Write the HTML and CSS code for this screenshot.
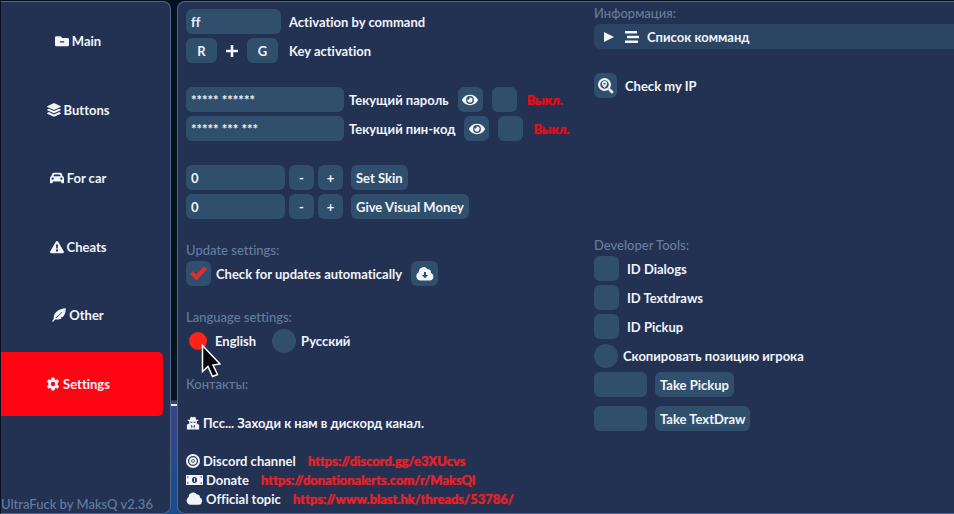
FILE: index.html
```html
<!DOCTYPE html>
<html lang="en">
<head>
<meta charset="utf-8">
<meta name="viewport" content="width=device-width, initial-scale=1">
<title>Settings</title>
<link rel="stylesheet" href="styles.css">
</head>
<body>
<div class="app">
  <aside class="sidebar">
    <nav class="nav">
      <button class="nav-item" type="button">
        <svg class="icon" viewBox="0 0 16 16" aria-hidden="true"><path fill-rule="evenodd" d="M2 2.500h4.500L8.300 4.500H14.500a1.500 1.500 0 0 1 1.500 1.500v6.500A1.500 1.500 0 0 1 14.500 14h-13A1.500 1.500 0 0 1 0 12.500V4a1.500 1.500 0 0 1 1.500-1.500zM5.500 8.200v1.600h5V8.200z"/></svg>
        <span>Main</span>
      </button>
      <button class="nav-item" type="button">
        <svg class="icon" viewBox="0 0 16 16" aria-hidden="true"><path d="M8 0l7.700 3.600c.4.200.4.700 0 .9L8 8 .3 4.500c-.4-.2-.4-.7 0-.9zM.3 7.400l1.900-.9L8 9.200l5.800-2.700 1.900.9c.4.200.4.700 0 .9L8 11.800.3 8.300c-.4-.2-.4-.7 0-.9zM.3 11.300l1.900-.9L8 13.100l5.800-2.700 1.900.9c.4.200.4.700 0 .9L8 15.800.3 12.200c-.4-.2-.4-.7 0-.9z"/></svg>
        <span>Buttons</span>
      </button>
      <button class="nav-item" type="button">
        <svg class="icon" viewBox="0 0 16 16" aria-hidden="true"><path fill-rule="evenodd" d="M4.500 2h7c1 0 1.700.5 2.100 1.400L14.500 6c.9.300 1.500 1 1.500 2v5c0 .6-.4 1-1 1h-1c-.6 0-1-.4-1-1v-1H3v1c0 .6-.4 1-1 1H1c-.6 0-1-.4-1-1V8c0-1 .6-1.700 1.500-2l.9-2.600C2.800 2.500 3.500 2 4.500 2zM4 6h8l-.6-1.600a.8.8 0 0 0-.7-.4H5.300a.8.8 0 0 0-.7.4zM3 7.500A1.300 1.300 0 1 0 3 10.100 1.300 1.300 0 1 0 3 7.500zm10 0a1.300 1.300 0 1 0 0 2.600 1.300 1.300 0 1 0 0-2.600z"/></svg>
        <span>For car</span>
      </button>
      <button class="nav-item" type="button">
        <svg class="icon" viewBox="0 0 16 16" aria-hidden="true"><path fill-rule="evenodd" d="M9.200 1.700l6.500 11.200c.5.900-.1 2.100-1.200 2.100h-13C.4 15-.2 13.800.3 12.900L6.800 1.700c.5-.9 1.900-.9 2.400 0zM6.800 5l.4 4.700h1.600L9.200 5zM8 10.700a1.300 1.300 0 1 0 0 2.600 1.300 1.300 0 1 0 0-2.600z"/></svg>
        <span>Cheats</span>
      </button>
      <button class="nav-item" type="button">
        <svg class="icon" viewBox="0 0 16 16" aria-hidden="true"><path fill-rule="evenodd" d="M15.600.3C15.900 4 14.800 8 12.500 10.200l-3.200.3 2 .8C9.500 12.800 6 13.500 3.500 13L1.300 15.600c-.5.500-1.500-.2-1-.9L2 12.300C1.700 9 3 6 5.500 4 8.500 1.500 12 .6 15.600.3zM11.500 4.200L4 11.200l.8.600 7.200-7.200z"/></svg>
        <span>Other</span>
      </button>
      <button class="nav-item nav-item-active" type="button" aria-current="page">
        <svg class="icon" viewBox="0 0 16 16" aria-hidden="true"><path fill-rule="evenodd" d="M6.500.5h3l.5 2.100 1.300.8 2.100-.7 1.500 2.600-1.600 1.500v2.400l1.600 1.500-1.500 2.600-2.100-.7-1.300.8-.5 2.100h-3L6 13.400l-1.300-.8-2.100.7-1.500-2.600 1.600-1.500V6.800L1.100 5.300l1.500-2.600 2.100.7L6 2.600zM8 5.500A2.500 2.500 0 1 0 8 10.500 2.500 2.500 0 1 0 8 5.500z"/></svg>
        <span>Settings</span>
      </button>
    </nav>
    <p class="version">UltraFuck by MaksQ v2.36</p>
  </aside>

  <main class="panel">
    <div class="column">
      <section class="group">
        <div class="row gap-m">
          <input class="box field-command" id="command" type="text" value="ff">
          <label for="command">Activation by command</label>
        </div>
        <div class="row gap-m">
          <div class="row keys">
            <button class="box key" type="button">R</button>
            <svg class="icon" viewBox="0 0 14 14" aria-hidden="true"><path d="M5.700 1h2.600v4.700H13v2.600H8.300V13H5.700V8.300H1V5.700h4.700z"/></svg>
            <button class="box key" type="button">G</button>
          </div>
          <span>Key activation</span>
        </div>
      </section>

      <section class="group">
        <div class="row gap-l">
          <div class="row gap-s">
            <input class="box field-secret" id="password" type="text" value="***** ******">
            <label for="password">Текущий пароль</label>
          </div>
          <button class="box square" type="button" aria-label="Show password">
            <svg class="icon" viewBox="0 0 16 16" aria-hidden="true"><path fill-rule="evenodd" d="M8 2.800c3.500 0 6.300 2 7.900 4.800.1.300.1.600 0 .9C14.300 11.300 11.500 13.200 8 13.200S1.700 11.300.1 8.500a1 1 0 0 1 0-.9C1.700 4.800 4.500 2.800 8 2.800zM8 4.100a3.900 3.900 0 1 0 0 7.800 3.900 3.900 0 1 0 0-7.800zM8 5.400a2.600 2.600 0 1 1-2.500 1.900 1.300 1.300 0 0 0 1.800-1.800c.2-.1.500-.1.700-.1z"/></svg>
          </button>
          <input class="box check" type="checkbox" aria-label="Use password">
          <span class="off">Выкл.</span>
        </div>
        <div class="row gap-l">
          <div class="row gap-s">
            <input class="box field-secret" id="pin" type="text" value="***** *** ***">
            <label for="pin">Текущий пин-код</label>
          </div>
          <button class="box square" type="button" aria-label="Show PIN">
            <svg class="icon" viewBox="0 0 16 16" aria-hidden="true"><path fill-rule="evenodd" d="M8 2.800c3.500 0 6.300 2 7.900 4.800.1.300.1.600 0 .9C14.300 11.300 11.500 13.200 8 13.200S1.700 11.300.1 8.500a1 1 0 0 1 0-.9C1.700 4.800 4.500 2.800 8 2.800zM8 4.100a3.900 3.900 0 1 0 0 7.800 3.900 3.900 0 1 0 0-7.800zM8 5.400a2.600 2.600 0 1 1-2.500 1.900 1.300 1.300 0 0 0 1.800-1.800c.2-.1.500-.1.700-.1z"/></svg>
          </button>
          <input class="box check" type="checkbox" aria-label="Use PIN">
          <span class="off">Выкл.</span>
        </div>
      </section>

      <section class="group">
        <div class="row gap-m">
          <div class="row gap-xs">
            <input class="box field-number" type="text" value="0" aria-label="Skin">
            <button class="box square" type="button">-</button>
            <button class="box square" type="button">+</button>
          </div>
          <button class="box action" type="button">Set Skin</button>
        </div>
        <div class="row gap-m">
          <div class="row gap-xs">
            <input class="box field-number" type="text" value="0" aria-label="Money">
            <button class="box square" type="button">-</button>
            <button class="box square" type="button">+</button>
          </div>
          <button class="box action" type="button">Give Visual Money</button>
        </div>
      </section>

      <section class="group">
        <h2 class="heading">Update settings:</h2>
        <div class="row gap-l">
          <div class="row gap-s">
            <input class="box check" id="updates" type="checkbox" checked>
            <label for="updates">Check for updates automatically</label>
          </div>
          <button class="box square download" type="button" aria-label="Download update">
            <svg class="icon" viewBox="0 0 18 14" aria-hidden="true"><path fill-rule="evenodd" d="M4.500 13.500A4.300 4.300 0 0 1 2.800 5.300 4.800 4.800 0 0 1 11.500 2.200a2.900 2.900 0 0 1 3.300 3.600 4 4 0 0 1-.8 7.700zM8 5v3H5.800L9 11.300 12.200 8H10V5z"/></svg>
          </button>
        </div>
      </section>

      <section class="group">
        <h2 class="heading">Language settings:</h2>
        <div class="row languages">
          <div class="row gap-s">
            <input class="radio" id="lang-en" name="lang" type="radio" checked>
            <label for="lang-en">English</label>
            <svg class="cursor" viewBox="0 0 20 34" aria-hidden="true"><path d="M1.500 1.500v26l5.500-5 4.500 10 5-2-4.500-9.500 7-1z"/></svg>
          </div>
          <div class="row gap-s">
            <input class="radio" id="lang-ru" name="lang" type="radio">
            <label for="lang-ru">Русский</label>
          </div>
        </div>
      </section>

      <section class="group">
        <h2 class="heading">Контакты:</h2>
      </section>

      <section class="contacts">
        <p class="line invite">
          <svg class="icon" viewBox="0 0 14 16" aria-hidden="true"><path fill-rule="evenodd" d="M4.500.8L7 1.400 9.500.8l1.300 3.500H13v1.500h-1.500l-.2 2.700L14 10v5.500H0V10l2.700-1.500-.2-2.700H1V4.300h2.200zM4 6.500v1.300h2.300V6.500zm3.700 0v1.300H10V6.500zM4.500 10l1.200 4.500.8-3zm5 0l-2 1.500.8 3z"/></svg>
          <span>Псс... Заходи к нам в дискорд канал.</span>
        </p>
        <p class="line">
          <svg class="icon" viewBox="0 0 14 14" aria-hidden="true"><circle class="ring" cx="7" cy="7" r="6"/><circle class="ring" cx="7" cy="7" r="2.800"/><circle cx="7" cy="7" r="1"/></svg>
          <span>Discord channel</span>
          <a class="link" href="https://discord.gg/e3XUcvs">https://discord.gg/e3XUcvs</a>
        </p>
        <p class="line">
          <svg class="icon icon-wide" viewBox="0 0 17 12" aria-hidden="true"><path fill-rule="evenodd" d="M0 1h17v10H0zM8.500 3C7 3 6 4.300 6 6s1 3 2.500 3S11 7.700 11 6 10 3 8.500 3zM8 4.200h1v3.600H8zM1.300 2.200v1.500h1V2.200zm0 6.100v1.500h1V8.300zM14.700 2.200v1.500h1V2.200zm0 6.100v1.500h1V8.300z"/></svg>
          <span>Donate</span>
          <a class="link" href="https://donationalerts.com/r/MaksQl">https://donationalerts.com/r/MaksQl</a>
        </p>
        <p class="line">
          <svg class="icon icon-wide" viewBox="0 0 18 14" aria-hidden="true"><path d="M4.500 13A4.300 4.300 0 0 1 2.800 5 4.800 4.800 0 0 1 11.500 2.200a2.900 2.900 0 0 1 3.300 3.300A4 4 0 0 1 14 13z"/></svg>
          <span>Official topic</span>
          <a class="link" href="https://www.blast.hk/threads/53786/">https://www.blast.hk/threads/53786/</a>
        </p>
      </section>
    </div>

    <div class="column column-side">
      <section class="info">
        <h2 class="heading">Информация:</h2>
        <details class="commands">
          <summary class="summary">
            <svg class="icon arrow" viewBox="0 0 10 12" aria-hidden="true"><path d="M0 1l10 5-10 5z"/></svg>
            <svg class="icon" viewBox="0 0 14 14" aria-hidden="true"><path d="M0 1h12v2.600H0zM2 5.700h12v2.600H2zM0 10.400h13V13H0z"/></svg>
            <span>Список комманд</span>
          </summary>
        </details>
        <div class="row gap-m ip">
          <button class="box tool" id="check-ip" type="button" aria-label="Check my IP">
            <svg class="icon" viewBox="0 0 14 14" aria-hidden="true"><circle class="ring" cx="5.700" cy="5.700" r="4.700"/><path fill-rule="evenodd" d="M8.800 10.400L10.400 8.800l3.400 3.400-1.600 1.600zM5.700 2.700a2.300 2.300 0 0 1 2.300 2.300c0 1.300-1.200 2.300-2.300 3.700C4.600 7.300 3.400 6.300 3.400 5a2.300 2.300 0 0 1 2.300-2.300zm0 1.500a.9.900 0 1 0 0 1.800.9.900 0 1 0 0-1.800z"/></svg>
          </button>
          <label for="check-ip">Check my IP</label>
        </div>
      </section>

      <section class="tools">
        <h2 class="heading">Developer Tools:</h2>
        <div class="row gap-m">
          <input class="box check" id="id-dialogs" type="checkbox">
          <label for="id-dialogs">ID Dialogs</label>
        </div>
        <div class="row gap-m">
          <input class="box check" id="id-textdraws" type="checkbox">
          <label for="id-textdraws">ID Textdraws</label>
        </div>
        <div class="row gap-m">
          <input class="box check" id="id-pickup" type="checkbox">
          <label for="id-pickup">ID Pickup</label>
        </div>
        <div class="row gap-s">
          <input class="radio" id="copy-position" type="radio">
          <label for="copy-position">Скопировать позицию игрока</label>
        </div>
        <div class="row gap-m">
          <input class="box field-id" type="text" aria-label="Pickup ID">
          <button class="box action" type="button">Take Pickup</button>
        </div>
        <div class="row gap-m take-textdraw">
          <input class="box field-id" type="text" aria-label="TextDraw ID">
          <button class="box action" type="button">Take TextDraw</button>
        </div>
      </section>
    </div>
  </main>
</div>
</body>
</html>
```
FILE: styles.css
```css
:root {
  --panel: #233252;
  --edge: #52658a;
  --box: #304f6d;
  --muted: #657c9f;
  --text: #f0f4fb;
  --red: #ff0513;
}

* {
  box-sizing: border-box;
}

body {
  margin: 0;
  background: linear-gradient(#03101f 0, #04131f 400px, #43406f 401px, #43406f 404px, #e4e8f5 404px, #e4e8f5 406px, #3c4285 406px, #1d4d8c 480px);
  color: var(--text);
  font: 700 13px/16px "Trebuchet MS", Lato, "Noto Sans", sans-serif;
  font-variant-ligatures: none;
}

h2,
p {
  margin: 0;
}

input,
button {
  margin: 0;
  border: 0;
  color: inherit;
  font: inherit;
  font-variant-ligatures: none;
}

.app {
  display: grid;
  grid-template-columns: 171px 1fr;
  gap: 6px;
  min-height: 100vh;
  padding-top: 1px;
}

.icon {
  flex: none;
  width: 14px;
  height: 14px;
  fill: currentColor;
}

.icon-wide {
  width: 17px;
}

.ring {
  fill: none;
  stroke: currentColor;
  stroke-width: 2;
}

.sidebar {
  display: flex;
  flex-direction: column;
  border: 1px solid var(--edge);
  border-left-color: #08101f;
  border-radius: 0 8px 8px 0;
  background: var(--panel);
}

.nav {
  display: grid;
  flex: 1;
  grid-auto-rows: 1fr;
  gap: 4px;
  margin: 7px 7px 80px 0;
}

.nav-item {
  display: flex;
  align-items: center;
  justify-content: center;
  gap: 3px;
  padding: 0 8px 0 0;
  border-radius: 0 5px 5px 0;
  background: none;
}

.nav-item-active {
  background: var(--red);
}

.version {
  padding-bottom: 1px;
  color: var(--muted);
  font-weight: 500;
  white-space: nowrap;
}

.panel {
  display: grid;
  grid-template-columns: 17fr 15fr;
  align-items: start;
  padding: 7px 0 0 8px;
  border: 1px solid var(--edge);
  border-right: 0;
  border-radius: 8px 0 0 8px;
  background: var(--panel);
}

.column,
.group,
.tools {
  display: flex;
  flex-direction: column;
}

.column {
  gap: 24px;
}

.group {
  gap: 4px;
}

.row {
  display: flex;
  align-items: center;
  min-height: 25px;
  white-space: nowrap;
}

.gap-xs {
  gap: 4px;
}

.gap-s {
  position: relative;
  gap: 5px;
}

.gap-m {
  gap: 8px;
}

.gap-l {
  gap: 9px;
}

.keys {
  gap: 8px;
  width: 95px;
}

.box {
  height: 25px;
  border-radius: 6px;
  background: var(--box);
}

input.box {
  padding: 0 5px;
}

.field-command {
  width: 95px;
}

.field-secret {
  width: 158px;
}

.field-number {
  width: 99px;
}

.field-id {
  width: 53px;
}

.key {
  width: 31px;
  padding: 0;
}

.square,
.check {
  display: grid;
  flex: none;
  place-items: center;
  width: 25px;
  padding: 0;
}

.square .icon,
.tool .icon {
  width: 16px;
  height: 16px;
}

.download {
  width: 27px;
}

.download .icon {
  width: 18px;
}

.check,
.radio {
  appearance: none;
}

input.check {
  padding: 0;
}

.check:checked::before {
  width: 17px;
  height: 14px;
  background: #e62a2d;
  clip-path: polygon(0 52%, 17% 34%, 36% 58%, 82% 0, 100% 18%, 38% 100%);
  content: "";
}

.radio {
  flex: none;
  width: 24px;
  height: 24px;
  border-radius: 50%;
  background: var(--box);
}

.radio:checked {
  border: 3px solid var(--panel);
  background: #ff2318;
}

.action {
  padding: 0 5px;
}

.off {
  padding-left: 1px;
  color: #e60f1d;
  text-shadow: 1px 0 1px #e60f1d;
}

.heading {
  color: var(--muted);
  font-size: 13px;
  font-weight: 500;
  line-height: 14px;
}

.languages {
  gap: 16px;
}

.cursor {
  position: absolute;
  top: 16px;
  left: 15px;
  width: 20px;
  height: 34px;
  fill: #05070d;
  stroke: #fff;
  stroke-width: 1.5;
}

.contacts {
  display: flex;
  flex-direction: column;
  gap: 3px;
}

.line {
  display: flex;
  align-items: center;
  gap: 3px;
  white-space: nowrap;
}

.invite {
  margin-bottom: 19px;
}

.link {
  margin-left: 9px;
  color: #e3242e;
  text-decoration: none;
  text-shadow: 1px 0 1px #e3242e;
}

.column-side {
  gap: 140px;
}

.info {
  margin-top: -3px;
}

.summary {
  display: flex;
  align-items: center;
  height: 25px;
  margin-top: 4px;
  padding-left: 10px;
  border-radius: 6px 0 0 6px;
  background: #2b4463;
  list-style: none;
}

.summary span {
  margin-left: 8px;
}

.arrow {
  width: 10px;
  margin-right: 11px;
}

.ip {
  margin-top: 24px;
}

.tool {
  display: grid;
  place-items: center;
  width: 23px;
  padding: 0;
}

.tools {
  gap: 4px;
}

.take-textdraw {
  margin-top: 5px;
}
```
